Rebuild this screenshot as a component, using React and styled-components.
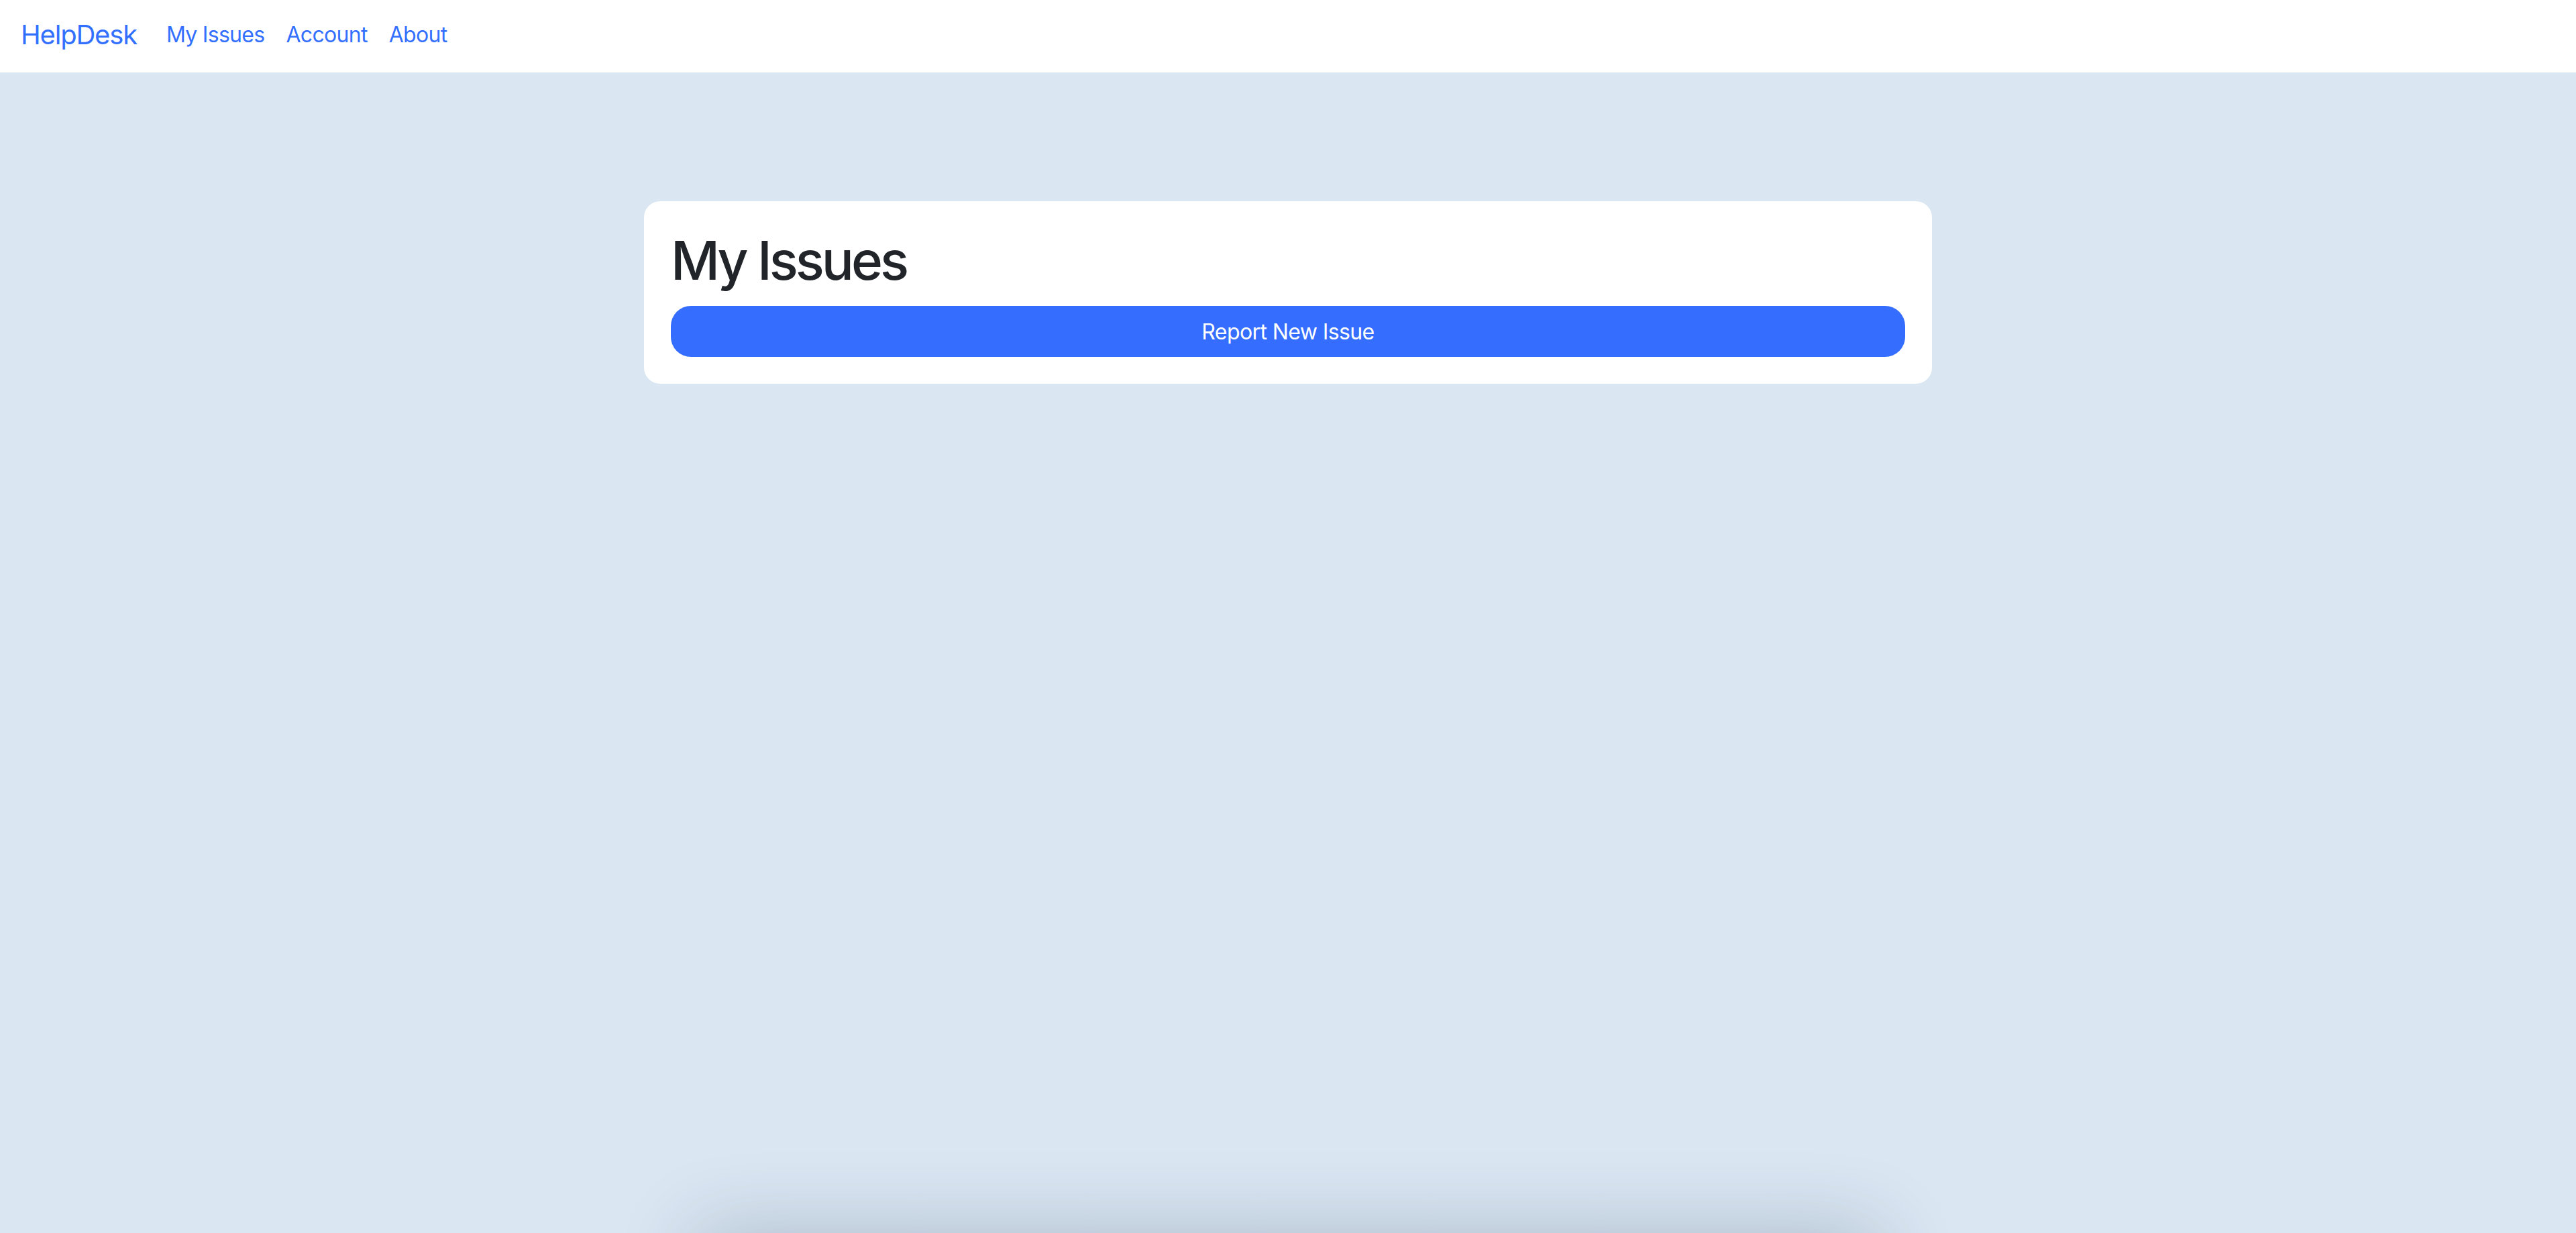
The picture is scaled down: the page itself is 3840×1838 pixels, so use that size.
import React from "react";
import styled, { createGlobalStyle } from "styled-components";

const GlobalStyle = createGlobalStyle`
  html, body {
    margin: 0;
    padding: 0;
    background: #dae6f2;
    font-family: Inter, "Noto Sans", "Liberation Sans", sans-serif;
    color: #212529;
  }
  * { box-sizing: border-box; }
`;

const Page = styled.div`
  min-height: 100vh;
  background: #dae6f2;
  overflow: hidden;
`;

const NavBar = styled.nav`
  height: 108px;
  background: #ffffff;
  display: flex;
  align-items: center;
  padding: 0 0 4px 31px;
`;

const Brand = styled.a`
  font-size: 40px;
  line-height: 60px;
  color: #3470ff;
  text-decoration: none;
  letter-spacing: -1.2px;
  margin-right: 28px;
`;

const NavLinks = styled.div`
  display: flex;
  align-items: center;
`;

const NavLink = styled.a`
  font-size: 32px;
  line-height: 48px;
  color: #3470ff;
  text-decoration: none;
  letter-spacing: -0.7px;
  padding: 0 16px;
`;

const Main = styled.main`
  display: flex;
  justify-content: center;
  padding-top: 192px;
`;

const Card = styled.section`
  width: 1920px;
  background: #ffffff;
  border-radius: 24px;
  padding: 40px;
`;

const Title = styled.h1`
  margin: 0 0 20px;
  font-size: 80px;
  line-height: 1.2;
  font-weight: 500;
  color: #212529;
  letter-spacing: -4px;
`;

const PrimaryButton = styled.button`
  display: block;
  width: 100%;
  height: 76px;
  border: none;
  border-radius: 30px;
  background: #356dff;
  color: #ffffff;
  font-family: Inter, "Noto Sans", "Liberation Sans", sans-serif;
  font-size: 32px;
  font-weight: 400;
  letter-spacing: -0.6px;
  cursor: pointer;
`;

const OffscreenSheet = styled.div`
  position: fixed;
  left: 50%;
  top: 100%;
  width: 1760px;
  height: 300px;
  transform: translateX(-50%);
  background: #ffffff;
  box-shadow: 0 0 120px rgba(20, 40, 70, 0.24);
`;

export default function App() {
  return (
    <Page>
      <GlobalStyle />
      <NavBar>
        <Brand href="#">HelpDesk</Brand>
        <NavLinks>
          <NavLink href="#">My Issues</NavLink>
          <NavLink href="#">Account</NavLink>
          <NavLink href="#">About</NavLink>
        </NavLinks>
      </NavBar>
      <Main>
        <Card>
          <Title>My Issues</Title>
          <PrimaryButton>Report New Issue</PrimaryButton>
        </Card>
      </Main>
      <OffscreenSheet />
    </Page>
  );
}
